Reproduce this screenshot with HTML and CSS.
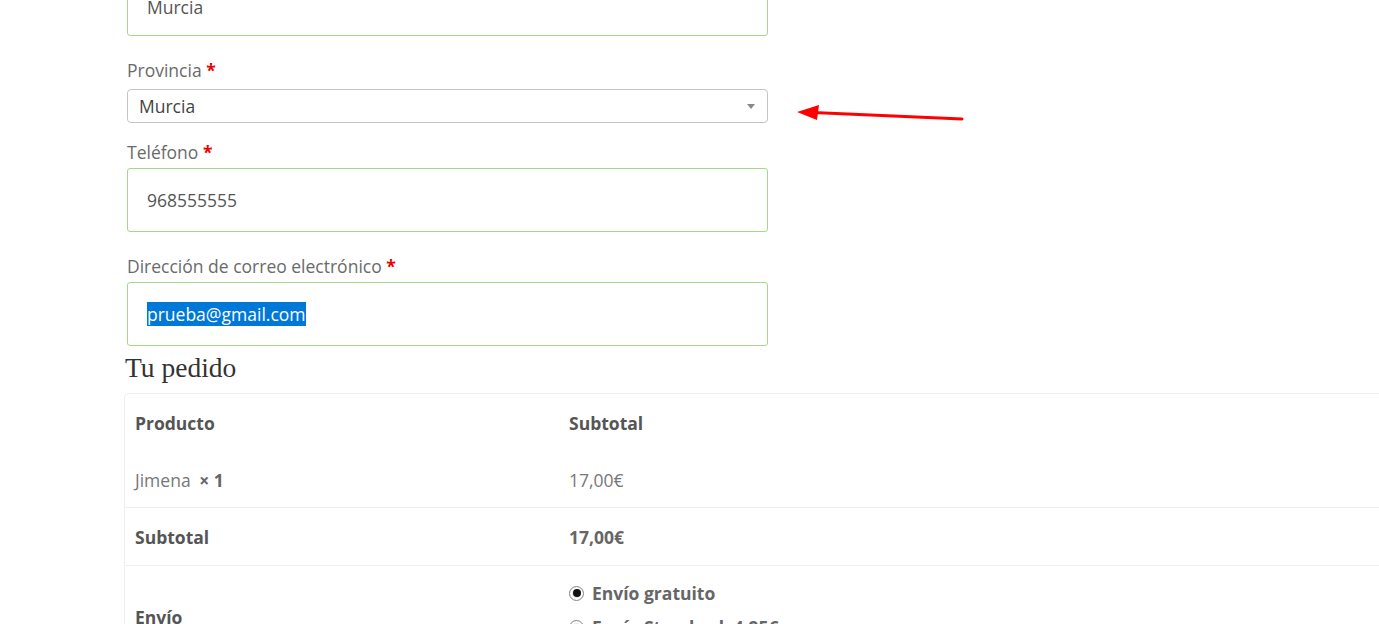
FILE: index.html
```html
<!DOCTYPE html>
<html lang="es">
<head>
  <meta charset="UTF-8">
  <title>Finalizar compra</title>
  <link rel="stylesheet" href="styles.css">
</head>
<body>

  <div class="pagina">
    <div class="formulario">
      <div class="campo">
        <div class="caja primera">Murcia</div>
      </div>

      <div class="campo campo-select">
        <label>Provincia <abbr class="req">*</abbr></label>
        <div class="select">
          <span>Murcia</span>
          <span class="flecha"></span>
        </div>
      </div>

      <div class="campo">
        <label>Teléfono <abbr class="req">*</abbr></label>
        <div class="caja">968555555</div>
      </div>

      <div class="campo ultimo">
        <label>Dirección de correo electrónico <abbr class="req">*</abbr></label>
        <div class="caja"><span class="marcado">prueba@gmail.com</span></div>
      </div>
    </div>

    <h3 class="titulo-pedido">Tu pedido</h3>

    <table class="pedido">
      <thead>
        <tr>
          <th class="col1">Producto</th>
          <th>Subtotal</th>
        </tr>
      </thead>
      <tbody>
        <tr class="item">
          <td>Jimena <strong class="cant">&times; 1</strong></td>
          <td>17,00€</td>
        </tr>
      </tbody>
      <tfoot>
        <tr>
          <th>Subtotal</th>
          <td><strong>17,00€</strong></td>
        </tr>
        <tr class="envio">
          <th>Envío</th>
          <td>
            <ul class="metodos">
              <li><span class="radio activo"></span> Envío gratuito</li>
              <li><span class="radio"></span> Envío Standard: 4,95€</li>
            </ul>
          </td>
        </tr>
      </tfoot>
    </table>
  </div>

  <!-- flecha roja de la captura -->
  <svg class="anotacion" width="170" height="24" viewBox="0 0 170 24">
    <line x1="165" y1="17" x2="16" y2="10.5" stroke="#f00" stroke-width="3" stroke-linecap="round"/>
    <polygon points="0,10 22,3 20,18" fill="#f00"/>
  </svg>

</body>
</html>
```

FILE: styles.css
```css
html, body {
  overflow: hidden;
}
body {
  margin: 0;
  background: #fff;
  font-family: 'Open Sans', sans-serif;
  font-size: 17.5px;
  color: #666;
}
.pagina {
  padding-left: 124px;
}
.formulario {
  width: 641px;
  margin-left: 3px;
  margin-top: -28px;
}
.campo {
  margin-bottom: 22px;
}
.campo.ultimo {
  margin-bottom: 0;
}
.campo-select {
  margin-bottom: 17px;
}
label {
  display: block;
  line-height: 24px;
  margin-bottom: 4px;
  color: #6a6a6a;
}
.campo-select label {
  margin-bottom: 7px;
}
.req {
  color: #e00;
  font-weight: bold;
  text-decoration: none;
  border: none;
}
.caja {
  box-sizing: border-box;
  height: 64px;
  border: 1px solid #a5d88a;
  border-radius: 3px;
  padding: 0 19px;
  display: flex;
  align-items: center;
  color: #555;
  line-height: 24px;
}
.caja.primera {
  padding-top: 6px;
}
.marcado {
  background: #0078d7;
  color: #fff;
}
.select {
  box-sizing: border-box;
  height: 34px;
  border: 1px solid #c4c4c4;
  border-radius: 4px;
  padding: 0 11px;
  display: flex;
  align-items: center;
  justify-content: space-between;
  color: #444;
}
.flecha {
  width: 0;
  height: 0;
  border-left: 4px solid transparent;
  border-right: 4px solid transparent;
  border-top: 5px solid #888;
  margin-right: 1px;
}
.titulo-pedido {
  font-family: 'Liberation Serif', serif;
  font-weight: normal;
  font-size: 27.5px;
  color: #333;
  margin: 2px 0 0 1px;
  line-height: 40px;
}
.pedido {
  width: 1300px;
  border: 1px solid #eee;
  border-radius: 5px;
  border-collapse: separate;
  border-spacing: 0;
  margin-top: 5px;
}
.pedido th, .pedido td {
  text-align: left;
  padding: 17px 10px 16px;
  line-height: 24px;
  border-top: 1px solid #eee;
  vertical-align: middle;
}
.pedido thead th, .pedido .item td {
  border-top: none;
}
.pedido .item td {
  padding-bottom: 15px;
}
.pedido th {
  color: #555;
  font-weight: bold;
}
.pedido .col1 {
  width: 414px;
}
.pedido td {
  color: #777;
}
.pedido td strong {
  color: #666;
}
.cant {
  margin-left: 4px;
  color: #555;
}
.envio td {
  padding: 15px 10px 17px;
}
.metodos {
  list-style: none;
  margin: 0;
  padding: 0;
}
.metodos li {
  font-weight: bold;
  color: #666;
  margin-bottom: 10px;
  display: flex;
  align-items: center;
  gap: 8px;
}
.radio {
  box-sizing: border-box;
  width: 15px;
  height: 15px;
  border: 1px solid #888;
  border-radius: 50%;
  background: #e8e8e8;
  box-shadow: inset 0 0 0 2px #fff;
  position: relative;
}
.radio.activo::after {
  content: "";
  position: absolute;
  left: 2.5px;
  top: 2.5px;
  width: 8px;
  height: 8px;
  border-radius: 50%;
  background: #111;
}
.anotacion {
  position: absolute;
  left: 797px;
  top: 102px;
}
```
